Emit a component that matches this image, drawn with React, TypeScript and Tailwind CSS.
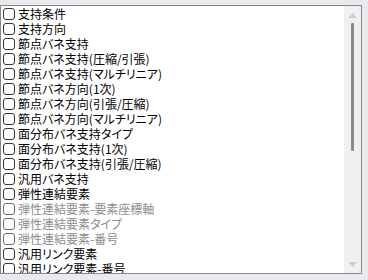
import React from "react";

const ITEMS: { label: string; disabled?: boolean }[] = [
  { label: "支持条件" },
  { label: "支持方向" },
  { label: "節点バネ支持" },
  { label: "節点バネ支持(圧縮/引張)" },
  { label: "節点バネ支持(マルチリニア)" },
  { label: "節点バネ方向(1次)" },
  { label: "節点バネ方向(引張/圧縮)" },
  { label: "節点バネ方向(マルチリニア)" },
  { label: "面分布バネ支持タイプ" },
  { label: "面分布バネ支持(1次)" },
  { label: "面分布バネ支持(引張/圧縮)" },
  { label: "汎用バネ支持" },
  { label: "弾性連結要素" },
  { label: "弾性連結要素-要素座標軸", disabled: true },
  { label: "弾性連結要素タイプ", disabled: true },
  { label: "弾性連結要素-番号", disabled: true },
  { label: "汎用リンク要素" },
  { label: "汎用リンク要素-番号" },
];

function Row({ label, disabled }: { label: string; disabled?: boolean }) {
  return (
    <div className="flex items-center h-[15px] shrink-0 pl-[2px] gap-[3px]">
      <span
        className={
          "w-[12px] h-[12px] rounded-[3px] border bg-white shrink-0 " +
          (disabled ? "border-[#6a6a6a]" : "border-[#333333]")
        }
      />
      <span className={"whitespace-nowrap leading-[15px] " + (disabled ? "text-[#8d8d8d]" : "text-black")}>
        {label}
      </span>
    </div>
  );
}

export default function App() {
  return (
    <div className="w-[368px] h-[280px] bg-[#e9eaee] pt-[5px] pr-[6px] pb-[6px] overflow-hidden">
      <div className="w-[362px] h-[269px] border border-[#828790] bg-white flex overflow-hidden">
        {/* list */}
        <div
          className="flex-1 flex flex-col overflow-hidden text-[12px] [font-feature-settings:'palt']"
          style={{ fontFamily: '"Noto Sans CJK JP", "Noto Sans", sans-serif' }}
        >
          {ITEMS.map(it => (
            <Row key={it.label} label={it.label} disabled={it.disabled} />
          ))}
        </div>

        {/* scrollbar */}
        <div className="w-[17px] bg-[#f0f0f0] flex flex-col items-center shrink-0">
          <svg width="9" height="5" viewBox="0 0 9 5" className="mt-[7px]">
            <polygon points="0,5 4.5,0 9,5" fill="#cdcdcd" />
          </svg>
          <div className="w-[3px] h-[128px] bg-[#8a8a8a] mt-[5px] rounded-[1px]" />
          <div className="flex-1" />
          <svg width="9" height="5" viewBox="0 0 9 5" className="mb-[6px]">
            <polygon points="0,0 9,0 4.5,5" fill="#cdcdcd" />
          </svg>
        </div>
      </div>
    </div>
  );
}
